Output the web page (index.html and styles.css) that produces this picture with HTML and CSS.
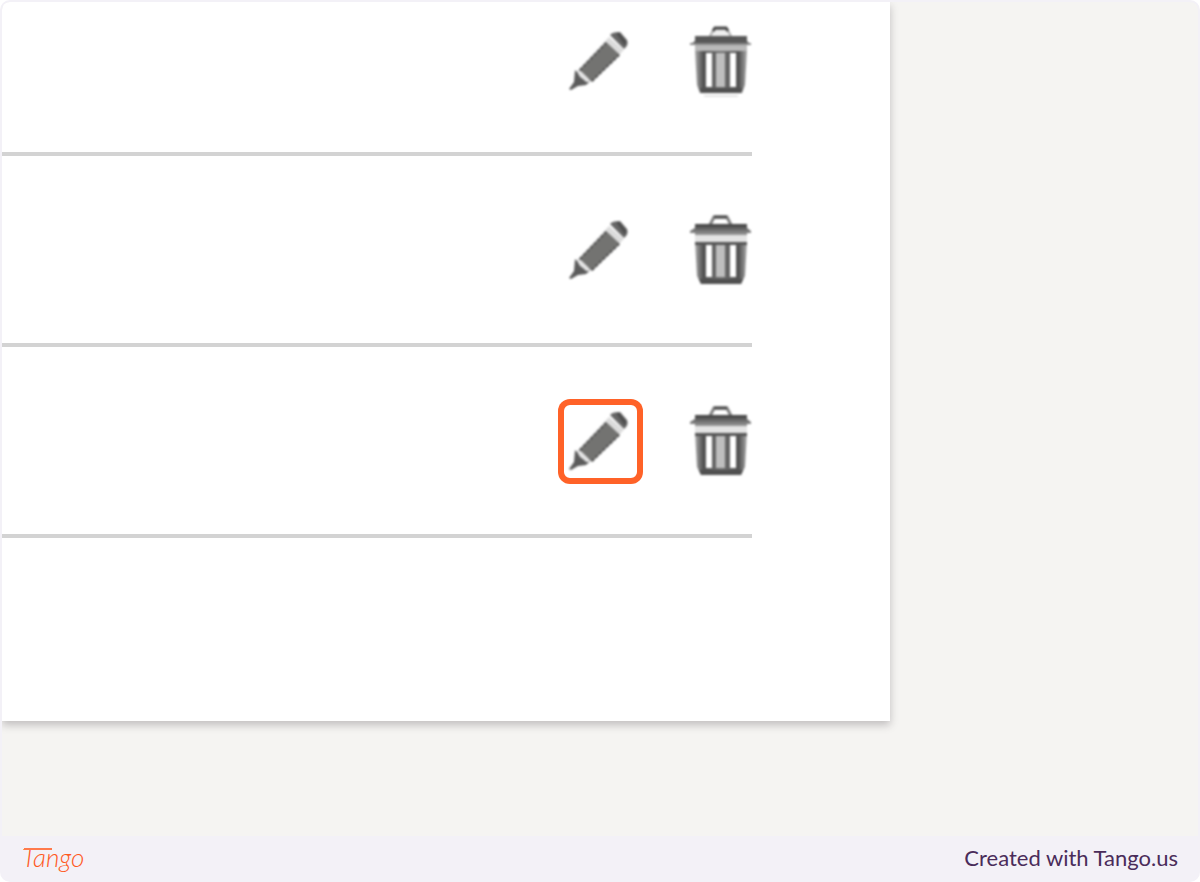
FILE: index.html
```html
<!DOCTYPE html>

<html lang="en">

<head>

<meta charset="utf-8">
<meta name="viewport" content="width=device-width, initial-scale=1">
<title>Tango</title>

<link rel="stylesheet" href="styles.css">

</head>

<body>

<!-- icon shapes shared by the rows -->
<svg class="shapes" aria-hidden="true">
<defs>

<linearGradient id="lid" x1="0" y1="0" x2="0" y2="1">
<stop offset="0" stop-color="#3c3c3c"/>
<stop offset="1" stop-color="#9a9a9a"/>
</linearGradient>

<linearGradient id="can" x1="0" y1="0" x2="1" y2="0">
<stop offset="0" stop-color="#aaa"/>
<stop offset="0.16" stop-color="#505050"/>
<stop offset="0.5" stop-color="#707070"/>
<stop offset="0.84" stop-color="#505050"/>
<stop offset="1" stop-color="#aaa"/>
</linearGradient>

<symbol id="pencil" viewBox="0 0 85 85">
<path d="M17 54 L51 18 L66 31 L30 65 Z" fill="#dcdcdc"/>
<path d="M21 51 L48 23 L62 36 L34 63 Z" fill="#737371"/>
<path d="M22 51 L48 24 M34 62 L61 36" fill="none" stroke="#505050" stroke-width="2" stroke-dasharray="3 2"/>
<path d="M52 16 Q54 13 62 13 L69 21 Q71 26 66 30 Z" fill="#666"/>
<path d="M58 14 L62 14 L68 22 L67 27 Z" fill="#4e4e4e"/>
<path d="M17 51 L20 54 L22 58 L28 62 L31 63 L28 66 L20 67 L13 71 L11 70 L16 63 Z" fill="#5c5c5c"/>
<path d="M22 54 L29 61" fill="none" stroke="#e4e4e4" stroke-width="4" stroke-linecap="round"/>
</symbol>

<symbol id="trash" viewBox="0 0 62 85">
<path d="M20 17 L24 9 H37 L41 17" fill="none" stroke="#808080" stroke-width="3"/>
<path d="M24 9 H37" stroke="#4a4a4a" stroke-width="3"/>
<path d="M5 16 H57 V20 L61 23 V25 H57 V27 H5 V25 H0 V23 L5 20 Z" fill="url(#lid)"/>
<rect x="5" y="27" width="52" height="7" fill="#e4e4e4"/>
<path d="M5 34 H57 L55 68 L51 76 H11 L7 68 Z" fill="url(#can)"/>
<path d="M5 34 H57 V37 H5 Z" fill="#555"/>
<path d="M9 71 H53 L51 76 H11 Z" fill="#505050"/>
<rect x="16" y="37" width="6" height="32" fill="#fff"/>
<rect x="26" y="37" width="9" height="32" fill="#bebebe"/>
<rect x="40" y="37" width="6" height="32" fill="#fff"/>
</symbol>

<symbol id="trash-top" viewBox="0 0 62 85">
<path d="M20 17 L24 10 H37 L41 17" fill="#eee" stroke="#aaa" stroke-width="2"/>
<path d="M23 12 L25 9 H36 L38 12" fill="none" stroke="#484848" stroke-width="3"/>
<path d="M5 17 H57 V22 L60 25 H1 L5 22 Z" fill="#585858"/>
<rect x="0" y="24" width="61" height="2" fill="#888"/>
<rect x="5" y="26" width="52" height="7" fill="#b9b9b9"/>
<path d="M5 32 H57 L55 66 L52 74 H10 L7 66 Z" fill="url(#can)"/>
<path d="M10 69 H52 L51 74 H11 Z" fill="#505050"/>
<rect x="16" y="34" width="6" height="34" fill="#fff"/>
<rect x="26" y="34" width="9" height="34" fill="#bebebe"/>
<rect x="40" y="34" width="6" height="34" fill="#fff"/>
<rect x="14" y="76" width="34" height="2" fill="#e4e4e4"/>
</symbol>

</defs>
</svg>

<div class="frame">

<main class="content">

<ul class="panel">

<li class="row first">
<button class="edit" type="button" aria-label="Edit"><svg class="icon"><use href="#pencil"/></svg></button>
<button class="delete" type="button" aria-label="Delete"><svg class="icon"><use href="#trash-top"/></svg></button>
</li>

<li class="row">
<button class="edit" type="button" aria-label="Edit"><svg class="icon"><use href="#pencil"/></svg></button>
<button class="delete" type="button" aria-label="Delete"><svg class="icon"><use href="#trash"/></svg></button>
</li>

<li class="row">
<button class="edit selected" type="button" aria-label="Edit"><svg class="icon"><use href="#pencil"/></svg></button>
<button class="delete" type="button" aria-label="Delete"><svg class="icon"><use href="#trash"/></svg></button>
</li>

</ul>

</main>

<footer class="footer">
<a class="logo" href="#">Tango</a>
<a class="credit" href="#">Created with Tango.us</a>
</footer>

</div>

</body>

</html>
```
FILE: styles.css
```css
* { box-sizing: border-box; }

body {
margin: 0;
background-color: white;
font-family: Lato, "Liberation Sans", sans-serif; }

.shapes {
position: absolute;
width: 0;
height: 0; }

.frame {
display: flex;
flex-direction: column;
min-height: 100vh;
padding: 2px 2px 0;
border-radius: 10px;
overflow: hidden;
background-color: #f3f1f7; }

.content {
flex: 1;
border-radius: 8px 8px 0 0;
overflow: hidden;
background-color: #f5f4f2; }

/* list of rows */

.panel {
margin: 0 308px 0 0;
padding: 0 138px 183px 0;
list-style: none;
background-color: white;
box-shadow: 0 4px 8px rgba(40, 30, 40, 0.25); }

.row {
display: flex;
justify-content: flex-end;
gap: 47px;
padding: 52px 0 50px;
border-bottom: 4px solid #d3d3d3; }

.first { padding: 17px 0 48px; }

.edit, .delete {
display: block;
height: 85px;
padding: 0;
border: none;
background: none;
cursor: pointer; }

.edit { width: 85px; }
.delete { width: 62px; }

.icon {
display: block;
width: 100%;
height: 85px;
overflow: visible;
filter: blur(1px); }

.selected {
border-radius: 12px;
box-shadow: inset 0 0 0 6px #ff6228; }

/* bottom bar */

.footer {
display: flex;
justify-content: space-between;
align-items: center;
height: 46px;
padding: 0 20px 4px; }

.footer a { text-decoration: none; }

.logo {
position: relative;
color: #ff5a1f;
font-size: 26px;
font-style: italic;
font-weight: 300; }

/* long bar of the T */
.logo::before {
content: "";
position: absolute;
left: 2px;
top: 7px;
width: 28px;
height: 2px;
background-color: #ff7a4c; }

.credit {
color: #4a2c5a;
font-size: 22px; }
```
